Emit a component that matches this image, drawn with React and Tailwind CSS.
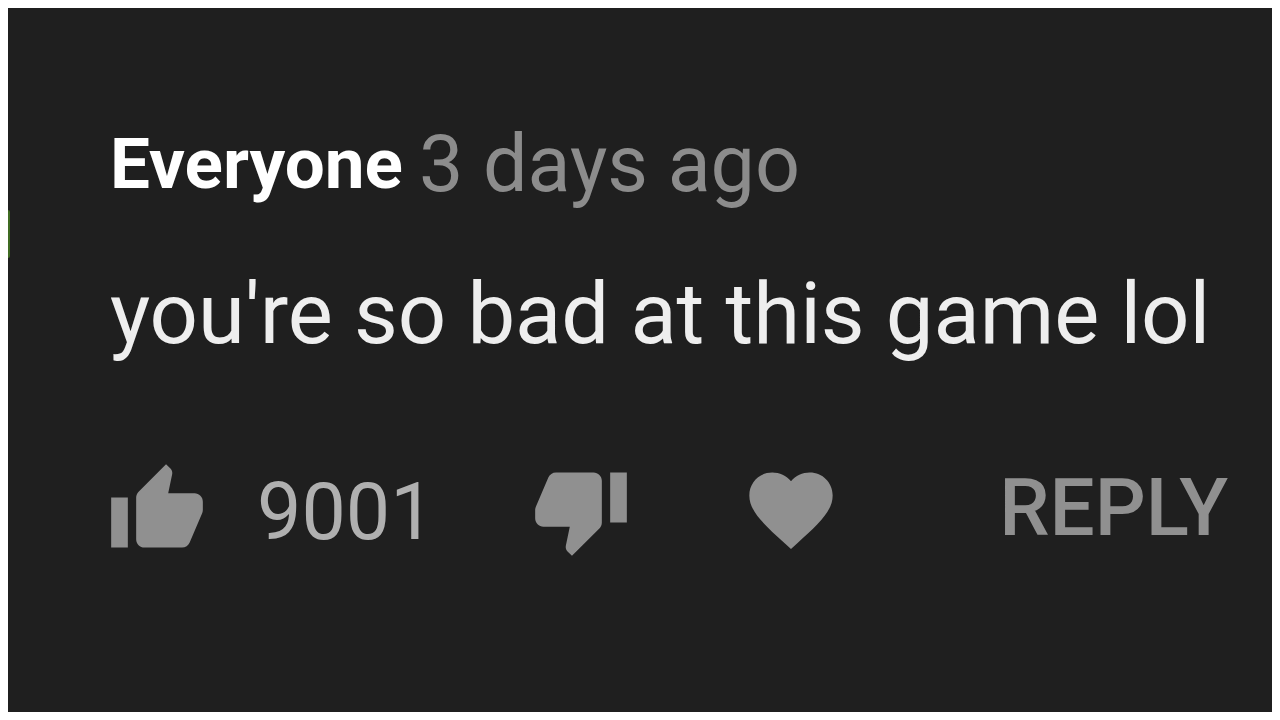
const THUMB =
  'M1 21h4V9H1v12zm22-11c0-1.100-.9-2-2-2h-6.310l.95-4.570.03-.320c0-.410-.170-.790-.440-1.060L14.170 1 7.590 7.590C7.220 7.950 7 8.450 7 9v10c0 1.100.9 2 2 2h9c.830 0 1.540-.5 1.840-1.220l3.020-7.050c.090-.230.140-.470.140-.730v-2z';

export default function App() {
  return (
    <div className="min-h-screen bg-white p-2 flex font-['Roboto','Liberation_Sans',sans-serif]">
      <main className="relative flex-1 bg-[#1f1f1f] pl-[100px] pr-11 pt-28">
        <span className="absolute left-0 top-[202px] h-12 w-0.5 rounded-r-full bg-[#3f6b22]" />
        <article>
          <header className="flex items-center gap-4 pl-0.5 leading-[88px] whitespace-nowrap">
            <a href="#author" className="text-[71px] font-bold text-white">Everyone</a>
            <time className="text-[79px] font-normal text-[#8c8c8c]">3 days ago</time>
          </header>
          <p className="mt-[62px] pl-0.5 text-[85px] leading-[88px] font-normal text-[#eeeeee] whitespace-nowrap">
            you're so bad at this game lol
          </p>
          <div className="mt-[102px] flex items-center text-[#909090]">
            <button aria-label="Like" className="-ml-px">
              <svg viewBox="0 0 24 24" className="size-[100px]" fill="currentColor"><path d={THUMB} /></svg>
            </button>
            <span className="ml-[50px] w-[170px] pt-1 text-[79px] leading-[88px] font-normal text-[#b0b0b0]">9001</span>
            <button aria-label="Dislike" className="ml-[104px]">
              <svg viewBox="0 0 24 24" className="size-[100px] rotate-180" fill="currentColor"><path d={THUMB} /></svg>
            </button>
            <button aria-label="Heart" className="ml-[110px]">
              <svg viewBox="0 0 24 24" className="size-[100px]" fill="currentColor">
                <path d="M12 21.350l-1.450-1.320C5.400 15.360 2 12.280 2 8.500 2 5.420 4.420 3 7.500 3c1.740 0 3.410.810 4.500 2.090C13.090 3.810 14.760 3 16.500 3 19.580 3 22 5.420 22 8.500c0 3.780-3.400 6.860-8.550 11.540L12 21.350z" />
              </svg>
            </button>
            <button className="ml-auto pb-1 text-[80px] leading-[88px] font-medium">REPLY</button>
          </div>
        </article>
      </main>
    </div>
  );
}
